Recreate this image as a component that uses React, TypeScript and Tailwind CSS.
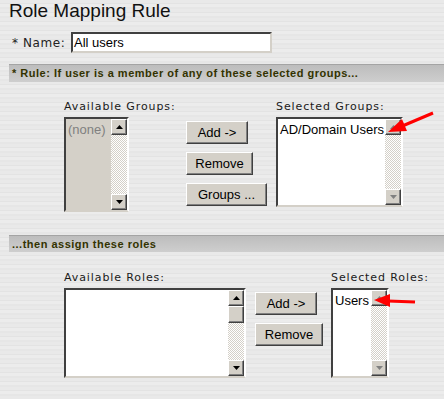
import React from "react";

const track =
  "bg-[repeating-conic-gradient(#ffffff_0%_25%,#d4d0c8_0%_50%)] bg-[length:2px_2px]";

function Arrow({ dir, dark }: { dir: "up" | "down"; dark: boolean }) {
  const fill = dark ? "#000000" : "#808080";
  return (
    <div className="w-4 h-4 shrink-0 bg-[#d4d0c8] border border-t-white border-l-white border-b-[#404040] border-r-[#404040] shadow-[inset_-1px_-1px_#808080] flex items-center justify-center">
      <svg width="7" height="4" viewBox="0 0 7 4">
        {dir === "up" ? (
          <polygon points="3.5,0 7,4 0,4" fill={fill} />
        ) : (
          <polygon points="0,0 7,0 3.5,4" fill={fill} />
        )}
      </svg>
    </div>
  );
}

function ListBox({
  width,
  height,
  items,
  disabled = false,
  dark = false,
  thumb = false,
}: {
  width: string;
  height: string;
  items: string[];
  disabled?: boolean;
  dark?: boolean;
  thumb?: boolean;
}) {
  return (
    <div
      className={`${width} ${height} flex border-2 border-t-[#404040] border-l-[#404040] border-b-[#d4d0c8] border-r-white ${
        disabled ? "bg-[#d4d0c8]" : "bg-white"
      }`}
    >
      <div className="flex-1 min-w-0 pl-[2px] pt-[3px] text-[13px] leading-[16px] whitespace-nowrap font-['Liberation_Sans',sans-serif]">
        {items.map((it) => (
          <div key={it} className={disabled ? "text-[#808080]" : "text-black"}>
            {it}
          </div>
        ))}
      </div>
      <div className={`w-4 shrink-0 flex flex-col ${track}`}>
        <Arrow dir="up" dark={dark} />
        {thumb && (
          <div className="w-4 h-[17px] bg-[#d4d0c8] border border-t-white border-l-white border-b-[#404040] border-r-[#404040] shadow-[inset_-1px_-1px_#808080]" />
        )}
        <div className="flex-1" />
        <Arrow dir="down" dark={dark} />
      </div>
    </div>
  );
}

function Btn({ label, w }: { label: string; w: string }) {
  return (
    <div
      className={`${w} h-[23px] bg-[#d4d0c8] border border-t-white border-l-white border-b-[#404040] border-r-[#404040] shadow-[inset_-1px_-1px_#808080] flex items-center justify-center text-[13px] text-black font-['Liberation_Sans',sans-serif]`}
    >
      {label}
    </div>
  );
}

function Bar({ text, h }: { text: string; h: string }) {
  return (
    <div
      className={`ml-[9px] ${h} border-t border-[#a4a4a4] bg-[linear-gradient(180deg,#bdbdbd,#cecece)] flex items-center pl-[3px] text-[11px] tracking-[0.5px] font-bold text-[#333300] font-['Liberation_Sans',sans-serif]`}
    >
      {text}
    </div>
  );
}

function Label({ text }: { text: string }) {
  return (
    <div className="text-[11px] leading-[14px] h-[18px] pt-[1px] tracking-[0.9px] whitespace-nowrap text-[#1a1a1a]">
      {text}
    </div>
  );
}

export default function App() {
  return (
    <div className="relative w-[444px] h-[399px] overflow-hidden bg-[#e8e8e8] bg-[repeating-linear-gradient(180deg,#e9e9e9_0px,#e9e9e9_3px,#e3e3e3_3px,#e3e3e3_4px,#ececec_4px,#ececec_7px,#e6e6e6_7px,#e6e6e6_9px)] font-['DejaVu_Sans',sans-serif] text-[#222]">
      <h1 className="pl-[9px] pt-[1px] text-[19px] leading-[20px] text-[#111] font-['Liberation_Sans',sans-serif]">
        Role Mapping Rule
      </h1>

      <div className="flex items-center mt-[11px] pl-[12px]">
        <span className="text-[12px] w-[59px] tracking-[0.6px]">* Name:</span>
        <div className="w-[201px] h-[21px] bg-white border-2 border-t-[#404040] border-l-[#404040] border-b-[#d4d0c8] border-r-[#d4d0c8] flex items-center pl-[1px] text-[13px] text-black font-['Liberation_Sans',sans-serif]">
          All users
        </div>
      </div>

      <div className="mt-[11px]">
        <Bar h="h-[18px]" text="* Rule: If user is a member of any of these selected groups..." />
      </div>

      <div className="flex pl-[64px] mt-[17px]">
        <div className="flex flex-col w-[65px]">
          <Label text="Available Groups:" />
          <ListBox width="w-[65px]" height="h-[95px]" items={["(none)"]} disabled dark />
        </div>
        <div className="flex flex-col gap-[8px] ml-[57px] mt-[22px]">
          <Btn label="Add ->" w="w-[62px]" />
          <Btn label="Remove" w="w-[67px]" />
          <Btn label="Groups ..." w="w-[81px]" />
        </div>
        <div className="flex flex-col ml-[9px] w-[127px]">
          <Label text="Selected Groups:" />
          <ListBox width="w-[127px]" height="h-[90px]" items={["AD/Domain Users"]} />
        </div>
      </div>

      <div className="mt-[23px]">
        <Bar h="h-[17px]" text="...then assign these roles" />
      </div>

      <div className="flex pl-[64px] mt-[18px]">
        <div className="flex flex-col w-[182px]">
          <Label text="Available Roles:" />
          <ListBox width="w-[182px]" height="h-[90px]" items={[]} dark thumb />
        </div>
        <div className="flex flex-col gap-[8px] ml-[9px] mt-[22px]">
          <Btn label="Add ->" w="w-[62px]" />
          <Btn label="Remove" w="w-[68px]" />
        </div>
        <div className="flex flex-col ml-[8px] w-[58px]">
          <Label text="Selected Roles:" />
          <ListBox width="w-[58px]" height="h-[90px]" items={["Users"]} />
        </div>
      </div>

      <svg className="absolute left-0 top-0 pointer-events-none" width="444" height="399" viewBox="0 0 444 399">
        <line x1="433" y1="113" x2="400" y2="127" stroke="#ff0000" strokeWidth="3" />
        <polygon points="388,132 407,131 402,119" fill="#ff0000" />
        <line x1="415" y1="302" x2="388" y2="301" stroke="#ff0000" strokeWidth="3" />
        <polygon points="374,300 390,294 390,307" fill="#ff0000" />
      </svg>
    </div>
  );
}
